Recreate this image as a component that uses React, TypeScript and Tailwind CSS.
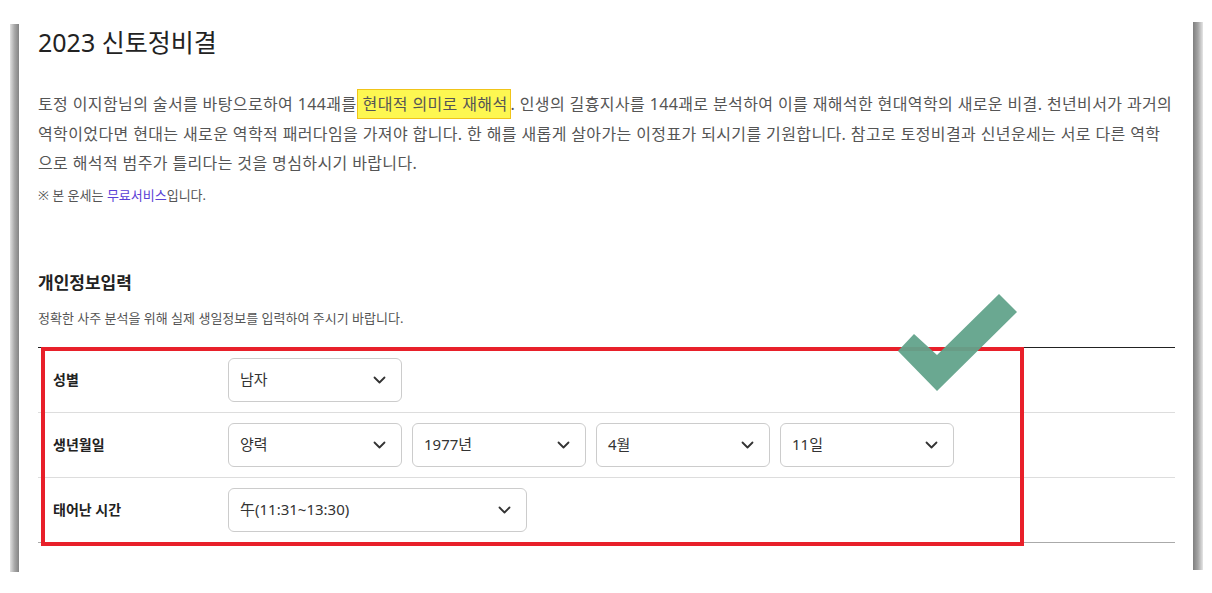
import React from 'react';

const font = "font-['Noto_Sans','Noto_Sans_CJK_KR',sans-serif]";

function Chevron() {
  return (
    <svg width="13" height="8" viewBox="0 0 13 8" fill="none" className="shrink-0">
      <path d="M1.5 1.5 L6.5 6.5 L11.5 1.5" stroke="#333" strokeWidth="1.8" strokeLinecap="round" strokeLinejoin="round" />
    </svg>
  );
}

function Select({ value, width }: { value: string; width: string }) {
  return (
    <div
      className={`${width} h-[44px] flex items-center justify-between pl-[11px] pr-[15px] border border-[#cccccc] rounded-[6px] bg-white text-[15px] text-[#333]`}
    >
      <span>{value}</span>
      <Chevron />
    </div>
  );
}

function Row({ label, children, last }: { label: string; children: React.ReactNode; last?: boolean }) {
  return (
    <div
      className={`h-[65px] flex items-center border-b ${last ? 'border-[#aaaaaa]' : 'border-[#dddddd]'}`}
    >
      <div className="w-[190px] pl-[15px] text-[14px] font-bold text-[#222]">{label}</div>
      <div className="flex gap-[10px]">{children}</div>
    </div>
  );
}

export default function App() {
  return (
    <div className={`w-[1212px] h-[593px] bg-white flex pl-[10px] pt-[22px] overflow-hidden ${font}`}>
      {/* left page shadow */}
      <div className="w-[9px] h-[548px] mt-[2px] bg-gradient-to-r from-[#e0e0e0] via-[#a8a8a8] to-[#838383]" />

      <div className="w-[1174px] pl-[19px] pr-[18px] pt-[2px] relative">
        <h1 className="text-[25px] leading-[36px] text-[#222] font-normal">2023 신토정비결</h1>

        <p className="mt-[30px] text-[16px] leading-[29.5px] tracking-[0.38px] text-[#555] whitespace-nowrap">
          토정 이지함님의 술서를 바탕으로하여 144괘를
          <span className="bg-[#fdf751] border border-[#f0c419] pl-[5px] pr-[2px] py-[3px] text-[#555]">현대적 의미로 재해석</span>. 인생의 길흉지사를 144괘로 분석하여 이를 재해석한 현대역학의 새로운 비결. 천년비서가 과거의
          <br />
          역학이었다면 현대는 새로운 역학적 패러다임을 가져야 합니다. 한 해를 새롭게 살아가는 이정표가 되시기를 기원합니다. 참고로 토정비결과 신년운세는 서로 다른 역학
          <br />
          으로 해석적 범주가 틀리다는 것을 명심하시기 바랍니다.
        </p>
        <p className="mt-[6px] text-[13px] leading-[20px] text-[#555]">
          ※ 본 운세는 <span className="text-[#5b3fd6]">무료서비스</span>입니다.
        </p>

        <h2 className="mt-[66px] text-[17px] leading-[24px] font-bold text-[#222]">개인정보입력</h2>
        <p className="mt-[13px] text-[13px] leading-[20px] text-[#555]">
          정확한 사주 분석을 위해 실제 생일정보를 입력하여 주시기 바랍니다.
        </p>

        <div className="mt-[19px] border-t border-[#222] relative">
          <Row label="성별">
            <Select value="남자" width="w-[174px]" />
          </Row>
          <Row label="생년월일">
            <Select value="양력" width="w-[174px]" />
            <Select value="1977년" width="w-[174px]" />
            <Select value="4월" width="w-[174px]" />
            <Select value="11일" width="w-[174px]" />
          </Row>
          <Row label="태어난 시간" last>
            <Select value="午(11:31~13:30)" width="w-[299px]" />
          </Row>

          {/* red highlight frame */}
          <div className="absolute left-[3px] top-[-1px] w-[983px] h-[199px] border-[4px] border-[#e8202a] pointer-events-none" />

          {/* check mark */}
          <svg
            className="absolute left-[859px] top-[-54px] pointer-events-none"
            width="121"
            height="99"
            viewBox="0 0 121 99"
          >
            <polygon points="1,57 17,40 40,61 102,0 120,18 40,97" fill="#62a38b" fillOpacity="0.95" />
          </svg>
        </div>
      </div>

      {/* right page shadow */}
      <div className="w-[10px] h-[548px] bg-gradient-to-r from-[#7f7f7f] via-[#a5a5a5] to-[#e6e6e6]" />
    </div>
  );
}
